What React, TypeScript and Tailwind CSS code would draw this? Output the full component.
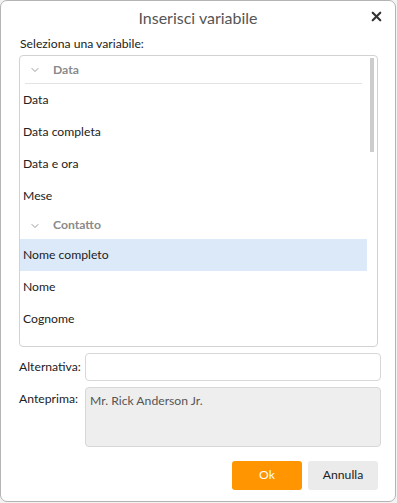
import { ChevronDown, X } from 'lucide-react';

type Row =
  | { kind: 'group'; label: string; line?: boolean }
  | { kind: 'item'; label: string; selected?: boolean };

const rows: Row[] = [
  { kind: 'group', label: 'Data', line: true },
  { kind: 'item', label: 'Data' },
  { kind: 'item', label: 'Data completa' },
  { kind: 'item', label: 'Data e ora' },
  { kind: 'item', label: 'Mese' },
  { kind: 'group', label: 'Contatto' },
  { kind: 'item', label: 'Nome completo', selected: true },
  { kind: 'item', label: 'Nome' },
  { kind: 'item', label: 'Cognome' },
];

export default function App() {
  return (
    <div
      className="h-[503px] w-[397px] bg-[#f3f3f3] text-[12.2px] text-[#222]"
      style={{ fontFamily: 'Lato, "Noto Sans", sans-serif' }}
    >
      <div className="flex h-[502px] w-[396px] flex-col rounded-[7px] border border-[#b4b4b4] bg-white">
        {/* header */}
        <div className="relative flex h-[34px] items-center justify-center">
          <h2 className="text-[16px] text-[#555]">Inserisci variabile</h2>
          <button className="absolute right-[11px] top-[8px] text-[#333]">
            <X size={15} strokeWidth={3.5} />
          </button>
        </div>

        <div className="pl-[17px] pr-[14px]">
          <p className="pl-[2px] leading-[17px]">Seleziona una variabile:</p>

          {/* list */}
          <div className="ml-[1px] mr-[3px] mt-[3px] flex h-[292px] rounded-[4px] border border-[#d2d2d2] bg-white pt-[1px]">
            <div className="flex-1 overflow-hidden">
              {rows.map((row, i) =>
                row.kind === 'group' ? (
                  <div key={i} className="px-[5px]">
                    <div
                      className={`flex h-[27px] items-center gap-[12px] pl-[4px] font-bold text-[#8a8a8a] ${
                        row.line ? 'border-b border-[#e3e3e3]' : ''
                      }`}
                    >
                      <ChevronDown size={12} strokeWidth={2} className="text-[#999]" />
                      <span>{row.label}</span>
                    </div>
                  </div>
                ) : (
                  <div
                    key={i}
                    className={`flex h-[32px] items-center pl-[3px] ${
                      row.selected ? 'bg-[#dbe9f9]' : ''
                    }`}
                  >
                    {row.label}
                  </div>
                )
              )}
            </div>
            <div className="w-[10px] pt-[1px]">
              <div className="ml-[3px] h-[94px] w-[4px] bg-[#cdcdcd]" />
            </div>
          </div>

          {/* fields */}
          <div className="mt-[6px] flex items-center">
            <label className="w-[67px] shrink-0 pl-[1px]">Alternativa:</label>
            <input className="h-[28px] flex-1 rounded-[4px] border border-[#d7d7d7] px-[5px] outline-none" />
          </div>
          <div className="mt-[6px] flex items-start">
            <label className="w-[67px] shrink-0 pl-[1px] pt-[3px]">Anteprima:</label>
            <div className="h-[60px] flex-1 rounded-[4px] border border-[#d7d7d7] bg-[#eeeeee] px-[4px] pt-[4px] text-[#555]">
              Mr. Rick Anderson Jr.
            </div>
          </div>

          {/* buttons */}
          <div className="mt-[14px] flex justify-end gap-[6px] pr-[3px]">
            <button className="h-[29px] w-[70px] rounded-[3px] bg-[#ff9500] text-white">Ok</button>
            <button className="h-[29px] w-[70px] rounded-[3px] bg-[#ebebeb] text-[#222]">Annulla</button>
          </div>
        </div>
      </div>
    </div>
  );
}
